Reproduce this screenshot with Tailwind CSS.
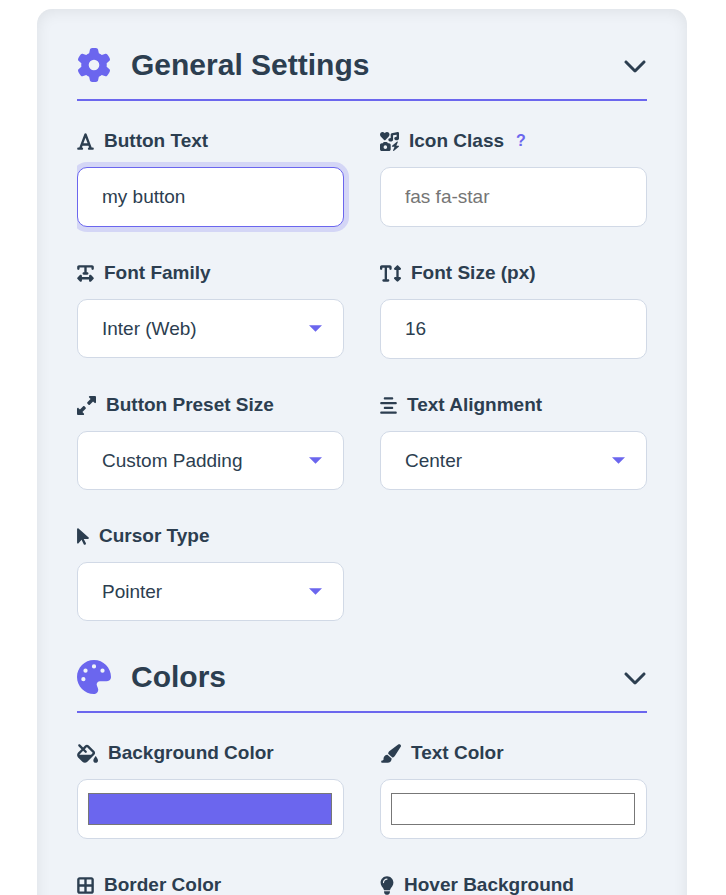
<!DOCTYPE html>
<html lang="en">
<head>
    <meta charset="UTF-8">
    <meta name="viewport" content="width=device-width, initial-scale=1.0">
    <title>Button Generator</title>
    <script src="https://cdn.jsdelivr.net/npm/@tailwindcss/browser@4"></script>
</head>
<body class="h-screen overflow-hidden bg-white pt-[9px] pl-[37px] pr-[39px] font-['Liberation_Sans',Arial,sans-serif] text-[19px] leading-7 text-[#2c3e50]">

    <form class="rounded-[15px] bg-[#eff3f8] px-10 pb-10 shadow-[inset_0_2px_15px_rgba(0,0,0,0.08)]">

        <!-- General settings -->
        <section class="pt-[38px]">
            <h2 class="border-b-2 border-[#6b66ee] pb-4">
                <button type="button" aria-expanded="true" class="flex h-9 w-full items-center gap-5 text-left text-[30px] font-bold">
                    <svg class="size-[34px] shrink-0 fill-[#6b66ee]" viewBox="0 0 512 512" aria-hidden="true"><path d="M495.9 166.6c3.2 8.7 .5 18.4-6.4 24.6l-43.3 39.4c1.1 8.3 1.7 16.8 1.7 25.4s-.6 17.1-1.7 25.4l43.3 39.4c6.9 6.2 9.6 15.9 6.4 24.6c-4.4 11.9-9.7 23.3-15.8 34.3l-4.7 8.1c-6.6 11-14 21.4-22.1 31.2c-5.9 7.2-15.7 9.6-24.5 6.8l-55.7-17.7c-13.4 10.3-28.2 18.9-44 25.4l-12.5 57.1c-2 9.1-9 16.3-18.2 17.8c-13.8 2.3-28 3.5-42.5 3.5s-28.7-1.2-42.5-3.5c-9.2-1.5-16.2-8.7-18.2-17.8l-12.5-57.1c-15.8-6.5-30.6-15.1-44-25.4L83.1 425.9c-8.8 2.8-18.6 .3-24.5-6.8c-8.1-9.8-15.5-20.2-22.1-31.2l-4.7-8.1c-6.1-11-11.4-22.4-15.8-34.3c-3.2-8.7-.5-18.4 6.4-24.6l43.3-39.4C64.6 273.1 64 264.6 64 256s.6-17.1 1.7-25.4L22.4 191.2c-6.9-6.2-9.6-15.9-6.4-24.6c4.4-11.9 9.7-23.3 15.8-34.3l4.7-8.1c6.6-11 14-21.4 22.1-31.2c5.9-7.2 15.7-9.6 24.5-6.8l55.7 17.7c13.4-10.3 28.2-18.9 44-25.4l12.5-57.1c2-9.1 9-16.3 18.2-17.8C227.3 1.2 241.5 0 256 0s28.7 1.2 42.5 3.5c9.2 1.5 16.2 8.7 18.2 17.8l12.5 57.1c15.8 6.5 30.6 15.1 44 25.4l55.7-17.7c8.8-2.8 18.6-.3 24.5 6.8c8.1 9.8 15.5 20.2 22.1 31.2l4.7 8.1c6.1 11 11.4 22.4 15.8 34.3zM256 336a80 80 0 1 0 0-160 80 80 0 1 0 0 160z"/></svg>
                    <span class="grow">General Settings</span>
                    <svg class="size-6 shrink-0 fill-[#2c3e50]" viewBox="0 0 512 512" aria-hidden="true"><path d="M233.4 406.6c12.5 12.5 32.8 12.5 45.3 0l192-192c12.5-12.5 12.5-32.8 0-45.3s-32.8-12.5-45.3 0L256 338.7 86.6 169.4c-12.5-12.5-32.8-12.5-45.3 0s-12.5 32.8 0 45.3l192 192z"/></svg>
                </button>
            </h2>

            <div class="grid grid-cols-2 items-start gap-x-9 gap-y-8 overflow-hidden pt-[26px]">
                <div>
                    <label for="button-text" class="mb-3 flex items-center gap-[10px] font-bold">
                        <svg class="h-[19px] w-[17px] fill-current" viewBox="0 0 448 512" aria-hidden="true"><path d="M254 52.8C249.3 40.3 237.3 32 224 32s-25.3 8.3-30 20.8L57.8 416H32c-17.7 0-32 14.3-32 32s14.3 32 32 32h96c17.7 0 32-14.3 32-32s-14.3-32-32-32h-1.8l18-48H303.8l18 48H320c-17.7 0-32 14.3-32 32s14.3 32 32 32h96c17.7 0 32-14.3 32-32s-14.3-32-32-32H390.2L254 52.8zM279.8 304H168.2L224 155.1 279.8 304z"/></svg>
                        Button Text
                    </label>
                    <input type="text" id="button-text" value="my button" class="block h-[60px] w-full rounded-[10px] border border-[#6b66ee] bg-white px-6 shadow-[0_0_0_5px_rgba(107,102,238,0.2)] outline-none">
                </div>

                <div>
                    <div class="mb-3 flex items-center gap-[10px] font-bold">
                        <label for="icon-class" class="flex items-center gap-[10px]">
                            <svg class="size-[19px] fill-current" viewBox="0 0 512 512" aria-hidden="true"><path d="M500.3 7.3C507.7 13.3 512 22.4 512 32V176c0 26.5-28.7 48-64 48s-64-21.5-64-48s28.7-48 64-48V71L352 90.2V208c0 26.5-28.7 48-64 48s-64-21.5-64-48s28.7-48 64-48V64c0-15.3 10.8-28.4 25.7-31.4l160-32c9.4-1.9 19.1 .6 26.6 6.6zM74.7 304l11.8-17.8c5.9-8.9 15.9-14.2 26.6-14.2h61.7c10.7 0 20.7 5.3 26.6 14.2L213.3 304H240c26.5 0 48 21.5 48 48V464c0 26.5-21.5 48-48 48H48c-26.5 0-48-21.5-48-48V352c0-26.5 21.5-48 48-48H74.7zM192 408a48 48 0 1 0 -96 0 48 48 0 1 0 96 0zM478.7 278.3L440.3 368H496c6.7 0 12.6 4.1 15 10.4s.6 13.3-4.4 17.7l-128 112c-5.6 4.9-13.9 5.3-19.9 .9s-8.2-12.4-5.3-19.2L391.7 400H336c-6.7 0-12.6-4.1-15-10.4s-.6-13.3 4.4-17.7l128-112c5.6-4.9 13.9-5.3 19.9-.9s8.2 12.4 5.3 19.2zm-339-59.2c-6.5 6.5-17 6.5-23 0L19.9 119.2c-28-29-26.5-76.9 5-103.9c27-23.5 68.4-19 93.4 6.5l10 10.5 9.5-10.5c25-25.5 65.9-30 93.9-6.5c31 27 32.5 74.9 4.5 103.9l-96.4 99.9z"/></svg>
                            Icon Class
                        </label>
                        <button type="button" class="ml-[2px] text-base font-bold text-[#6b66ee]">?</button>
                    </div>
                    <input type="text" id="icon-class" placeholder="fas fa-star" class="block h-[60px] w-full rounded-[10px] border border-[#d1d9e6] bg-white px-6 placeholder:text-[#757575] outline-none">
                </div>

                <div>
                    <label for="font-family" class="mb-3 flex items-center gap-[10px] font-bold">
                        <svg class="h-[19px] w-[17px] fill-current" viewBox="0 0 448 512" aria-hidden="true"><path d="M64 128V96H192l0 128H176c-17.7 0-32 14.3-32 32s14.3 32 32 32h96c17.7 0 32-14.3 32-32s-14.3-32-32-32H256l0-128H384v32c0 17.7 14.3 32 32 32s32-14.3 32-32V80c0-26.5-21.5-48-48-48H224 48C21.5 32 0 53.5 0 80v48c0 17.7 14.3 32 32 32s32-14.3 32-32zM9.4 361.4c-12.5 12.5-12.5 32.8 0 45.3l64 64c9.2 9.2 22.9 11.9 34.9 6.9s19.8-16.6 19.8-29.6V416H320v32c0 12.9 7.8 24.6 19.8 29.6s25.7 2.2 34.9-6.9l64-64c12.5-12.5 12.5-32.8 0-45.3l-64-64c-9.2-9.2-22.9-11.9-34.9-6.9s-19.8 16.6-19.8 29.6v32H128V320c0-12.9-7.8-24.6-19.8-29.6s-25.7-2.2-34.9 6.9l-64 64z"/></svg>
                        Font Family
                    </label>
                    <div class="relative">
                        <select id="font-family" class="block h-[59px] w-full appearance-none rounded-[10px] border border-[#d1d9e6] bg-white px-6 outline-none">
                            <option>Inter (Web)</option>
                        </select>
                        <svg class="pointer-events-none absolute inset-y-0 right-[22px] my-auto h-[7px] w-[13px] fill-[#6b66ee]" viewBox="0 0 14 7" aria-hidden="true"><path d="M0 0h14L7 7z"/></svg>
                    </div>
                </div>

                <div>
                    <label for="font-size" class="mb-3 flex items-center gap-[10px] font-bold">
                        <svg class="h-[19px] w-[21px] fill-current" viewBox="0 0 576 512" aria-hidden="true"><path d="M64 128V96h64l0 320H96c-17.7 0-32 14.3-32 32s14.3 32 32 32H224c17.7 0 32-14.3 32-32s-14.3-32-32-32H192l0-320h64v32c0 17.7 14.3 32 32 32s32-14.3 32-32V80c0-26.5-21.5-48-48-48H160 48C21.5 32 0 53.5 0 80v48c0 17.7 14.3 32 32 32s32-14.3 32-32zM502.6 41.4c-12.5-12.5-32.8-12.5-45.3 0l-64 64c-9.2 9.2-11.9 22.9-6.9 34.9s16.6 19.8 29.6 19.8h32V352H416c-12.9 0-24.6 7.8-29.6 19.8s-2.2 25.7 6.9 34.9l64 64c12.5 12.5 32.8 12.5 45.3 0l64-64c9.2-9.2 11.9-22.9 6.9-34.9s-16.6-19.8-29.6-19.8H512V160h32c12.9 0 24.6-7.8 29.6-19.8s2.2-25.7-6.9-34.9l-64-64z"/></svg>
                        Font Size (px)
                    </label>
                    <input type="number" id="font-size" value="16" class="block h-[60px] w-full rounded-[10px] border border-[#d1d9e6] bg-white px-6 outline-none">
                </div>

                <div>
                    <label for="preset-size" class="mb-3 flex items-center gap-[10px] font-bold">
                        <svg class="size-[19px] fill-current" viewBox="0 0 512 512" aria-hidden="true"><path d="M344 0H488c13.3 0 24 10.7 24 24V168c0 9.7-5.8 18.5-14.8 22.2s-19.3 1.7-26.2-5.2l-39-39-87 87c-9.4 9.4-24.6 9.4-33.9 0l-32-32c-9.4-9.4-9.4-24.6 0-33.9l87-87L327 41c-6.9-6.9-8.9-17.2-5.2-26.2S334.3 0 344 0zM168 512H24c-13.3 0-24-10.7-24-24V344c0-9.7 5.8-18.5 14.8-22.2s19.3-1.7 26.2 5.2l39 39 87-87c9.4-9.4 24.6-9.4 33.9 0l32 32c9.4 9.4 9.4 24.6 0 33.9l-87 87 39 39c6.9 6.9 8.9 17.2 5.2 26.2s-12.5 14.8-22.2 14.8z"/></svg>
                        Button Preset Size
                    </label>
                    <div class="relative">
                        <select id="preset-size" class="block h-[59px] w-full appearance-none rounded-[10px] border border-[#d1d9e6] bg-white px-6 outline-none">
                            <option>Custom Padding</option>
                        </select>
                        <svg class="pointer-events-none absolute inset-y-0 right-[22px] my-auto h-[7px] w-[13px] fill-[#6b66ee]" viewBox="0 0 14 7" aria-hidden="true"><path d="M0 0h14L7 7z"/></svg>
                    </div>
                </div>

                <div>
                    <label for="text-alignment" class="mb-3 flex items-center gap-[10px] font-bold">
                        <svg class="h-[19px] w-[17px] fill-current" viewBox="0 0 448 512" aria-hidden="true"><path d="M352 64c0-17.7-14.3-32-32-32H128c-17.7 0-32 14.3-32 32s14.3 32 32 32H320c17.7 0 32-14.3 32-32zm96 128c0-17.7-14.3-32-32-32H32c-17.7 0-32 14.3-32 32s14.3 32 32 32H416c17.7 0 32-14.3 32-32zM0 448c0 17.7 14.3 32 32 32H416c17.7 0 32-14.3 32-32s-14.3-32-32-32H32c-17.7 0-32 14.3-32 32zM352 320c0-17.7-14.3-32-32-32H128c-17.7 0-32 14.3-32 32s14.3 32 32 32H320c17.7 0 32-14.3 32-32z"/></svg>
                        Text Alignment
                    </label>
                    <div class="relative">
                        <select id="text-alignment" class="block h-[59px] w-full appearance-none rounded-[10px] border border-[#d1d9e6] bg-white px-6 outline-none">
                            <option>Center</option>
                        </select>
                        <svg class="pointer-events-none absolute inset-y-0 right-[22px] my-auto h-[7px] w-[13px] fill-[#6b66ee]" viewBox="0 0 14 7" aria-hidden="true"><path d="M0 0h14L7 7z"/></svg>
                    </div>
                </div>

                <div>
                    <label for="cursor-type" class="mb-3 flex items-center gap-[10px] font-bold">
                        <svg class="h-[19px] w-3 fill-current" viewBox="0 0 320 512" aria-hidden="true"><path d="M0 55.2V426c0 12.2 9.9 22 22 22c6.3 0 12.4-2.7 16.6-7.5L121.2 346l58.1 116.3c7.9 15.8 27.1 22.2 42.9 14.3s22.2-27.1 14.3-42.9L179.8 320H297.9c12.2 0 22.1-9.9 22.1-22.1c0-6.3-2.7-12.3-7.4-16.5L38.6 37.9C34.3 34.1 28.9 32 23.2 32C10.4 32 0 42.4 0 55.2z"/></svg>
                        Cursor Type
                    </label>
                    <div class="relative">
                        <select id="cursor-type" class="block h-[59px] w-full appearance-none rounded-[10px] border border-[#d1d9e6] bg-white px-6 outline-none">
                            <option>Pointer</option>
                        </select>
                        <svg class="pointer-events-none absolute inset-y-0 right-[22px] my-auto h-[7px] w-[13px] fill-[#6b66ee]" viewBox="0 0 14 7" aria-hidden="true"><path d="M0 0h14L7 7z"/></svg>
                    </div>
                </div>
            </div>
        </section>

        <!-- Colors -->
        <section class="pt-[38px]">
            <h2 class="border-b-2 border-[#6b66ee] pb-4">
                <button type="button" aria-expanded="true" class="flex h-9 w-full items-center gap-5 text-left text-[30px] font-bold">
                    <svg class="size-[34px] shrink-0 fill-[#6b66ee]" viewBox="0 0 512 512" aria-hidden="true"><path d="M512 256c0 .9 0 1.8 0 2.7c-.4 36.5-33.6 61.3-70.1 61.3H344c-26.5 0-48 21.5-48 48c0 3.4 .4 6.7 1 9.9c2.1 10.2 6.5 20 10.8 29.9c6.1 13.8 12.1 27.5 12.1 42c0 31.8-21.6 60.7-53.4 62c-3.5 .1-7 .2-10.6 .2C114.6 512 0 397.4 0 256S114.6 0 256 0S512 114.6 512 256zM128 288a32 32 0 1 0 -64 0 32 32 0 1 0 64 0zm0-96a32 32 0 1 0 0-64 32 32 0 1 0 0 64zM288 96a32 32 0 1 0 -64 0 32 32 0 1 0 64 0zm96 96a32 32 0 1 0 0-64 32 32 0 1 0 0 64z"/></svg>
                    <span class="grow">Colors</span>
                    <svg class="size-6 shrink-0 fill-[#2c3e50]" viewBox="0 0 512 512" aria-hidden="true"><path d="M233.4 406.6c12.5 12.5 32.8 12.5 45.3 0l192-192c12.5-12.5 12.5-32.8 0-45.3s-32.8-12.5-45.3 0L256 338.7 86.6 169.4c-12.5-12.5-32.8-12.5-45.3 0s-12.5 32.8 0 45.3l192 192z"/></svg>
                </button>
            </h2>

            <div class="grid grid-cols-2 items-start gap-x-9 gap-y-8 overflow-hidden pt-[26px]">
                <div>
                    <label for="bg-color" class="mb-3 flex items-center gap-[10px] font-bold">
                        <svg class="h-[19px] w-[21px] fill-current" viewBox="0 0 576 512" aria-hidden="true"><path d="M41.4 9.4C53.9-3.1 74.1-3.1 86.6 9.4L168 90.7l53.1-53.1c28.1-28.1 73.7-28.1 101.8 0L474.3 189.1c28.1 28.1 28.1 73.7 0 101.8L283.9 481.4c-37.5 37.5-98.3 37.5-135.8 0L30.6 363.9c-37.5-37.5-37.5-98.3 0-135.8L122.7 136 41.4 54.6c-12.5-12.5-12.5-32.8 0-45.3zm176 221.3L168 181.3 75.9 273.4c-4.2 4.2-7 9.3-8.4 14.6H386.7l42.3-42.3c3.1-3.1 3.1-8.2 0-11.3L277.7 82.9c-3.1-3.1-8.2-3.1-11.3 0L213.3 136l49.4 49.4c12.5 12.5 12.5 32.8 0 45.3s-32.8 12.5-45.3 0zM512 512c-35.3 0-64-28.7-64-64c0-25.2 32.6-79.6 51.2-108.7c6-9.4 19.5-9.4 25.5 0C543.4 368.4 576 422.8 576 448c0 35.3-28.7 64-64 64z"/></svg>
                        Background Color
                    </label>
                    <input type="color" id="bg-color" value="#6b66ee" class="block h-[60px] w-full rounded-[10px] border border-[#d1d9e6] bg-white py-[9px] pr-[9px] pl-2">
                </div>

                <div>
                    <label for="text-color" class="mb-3 flex items-center gap-[10px] font-bold">
                        <svg class="h-[19px] w-[21px] fill-current" viewBox="0 0 576 512" aria-hidden="true"><path d="M339.3 367.1c27.3-3.9 51.9-19.4 67.2-42.9L568.2 74.1c12.6-19.5 9.4-45.3-7.6-61.2S517.7-4.4 499.1 9.6L262.4 187.2c-24 18-38.2 46.1-38.4 76.1L339.3 367.1zm-19.6 25.4l-116-104.4C143.9 290.3 96 339.6 96 400c0 3.9 .2 7.8 .6 11.6C98.4 429.1 86.4 448 68.8 448H64c-17.7 0-32 14.3-32 32s14.3 32 32 32H208c61.9 0 112-50.1 112-112c0-2.5-.1-5-.2-7.5z"/></svg>
                        Text Color
                    </label>
                    <input type="color" id="text-color" value="#ffffff" class="block h-[60px] w-full rounded-[10px] border border-[#d1d9e6] bg-white py-[9px] pr-[9px] pl-2">
                </div>

                <div>
                    <label for="border-color" class="mb-3 flex items-center gap-[10px] font-bold">
                        <svg class="h-[19px] w-[17px] fill-current" viewBox="0 0 448 512" aria-hidden="true"><path d="M384 96V224H256V96H384zm0 192V416H256V288H384zM192 224H64V96H192V224zM64 288H192V416H64V288zM64 32C28.7 32 0 60.7 0 96V416c0 35.3 28.7 64 64 64H384c35.3 0 64-28.7 64-64V96c0-35.3-28.7-64-64-64H64z"/></svg>
                        Border Color
                    </label>
                    <input type="color" id="border-color" value="#6b66ee" class="block h-[60px] w-full rounded-[10px] border border-[#d1d9e6] bg-white py-[9px] pr-[9px] pl-2">
                </div>

                <div>
                    <label for="hover-bg" class="mb-3 flex items-center gap-[10px] font-bold">
                        <svg class="h-[19px] w-[14px] fill-current" viewBox="0 0 384 512" aria-hidden="true"><path d="M272 384c9.6-31.9 29.5-59.1 49.2-86.2l0 0c5.2-7.1 10.4-14.2 15.4-21.4c19.8-28.5 31.4-63 31.4-100.3C368 78.8 289.2 0 192 0S16 78.8 16 176c0 37.3 11.6 71.9 31.4 100.3c5 7.2 10.2 14.3 15.4 21.4l0 0c19.8 27.1 39.7 54.4 49.2 86.2H272zM192 512c44.2 0 80-35.8 80-80V416H112v16c0 44.2 35.8 80 80 80zM112 176c0 8.8-7.2 16-16 16s-16-7.2-16-16c0-61.9 50.1-112 112-112c8.8 0 16 7.2 16 16s-7.2 16-16 16c-44.2 0-80 35.8-80 80z"/></svg>
                        Hover Background
                    </label>
                    <input type="color" id="hover-bg" value="#5a54d6" class="block h-[60px] w-full rounded-[10px] border border-[#d1d9e6] bg-white py-[9px] pr-[9px] pl-2">
                </div>
            </div>
        </section>
    </form>

</body>
</html>
